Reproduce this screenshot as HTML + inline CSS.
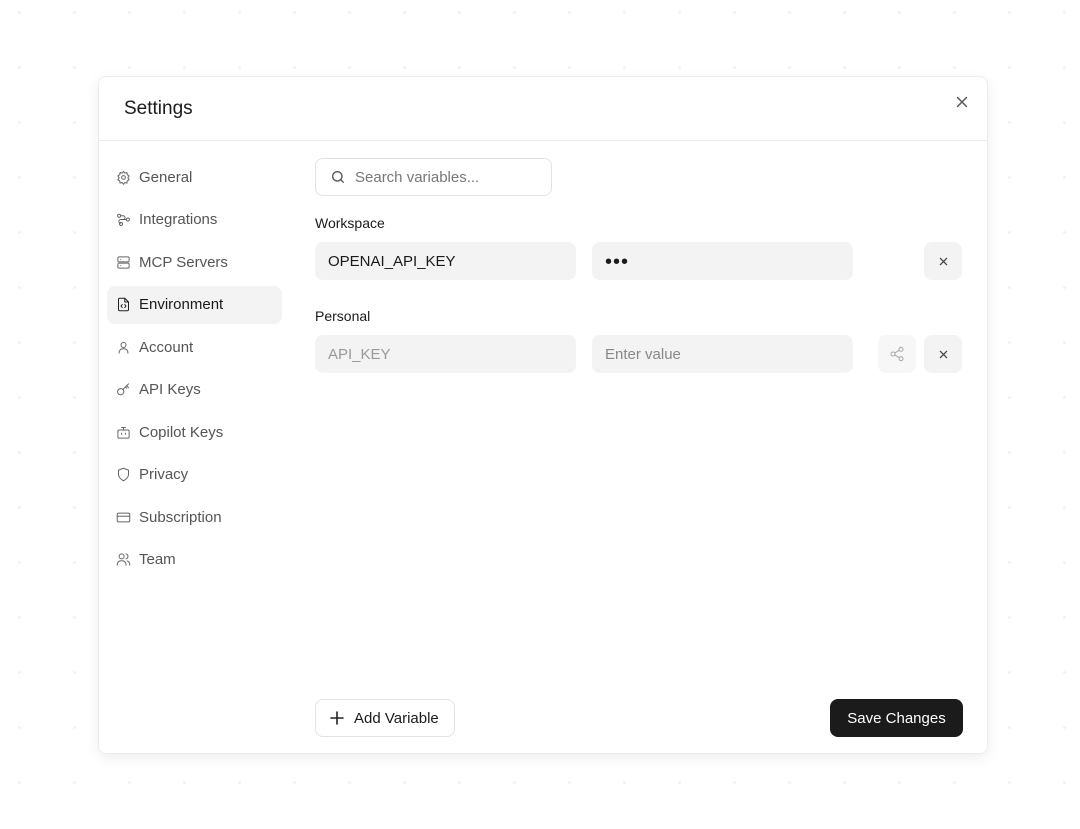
<!DOCTYPE html>
<html><head><style>
*{box-sizing:border-box;margin:0;padding:0}
body{width:1080px;height:829px;overflow:hidden;font-family:"Liberation Sans",sans-serif;background:#fff;background-image:radial-gradient(circle,#f1f1f1 1.2px,transparent 1.7px);background-size:55px 55px;background-position:-8px -15px;position:relative}
.modal{position:absolute;left:98px;top:76px;width:890px;height:678px;background:#fff;border:1px solid #ececec;border-radius:8px;box-shadow:0 4px 14px rgba(0,0,0,.07)}
.title{position:absolute;left:25px;top:21px;font-size:19px;color:#1a1a1a}
.close{position:absolute;left:855px;top:17px}
.hr{position:absolute;left:0;right:0;top:63px;border-top:1px solid #ececec}
.nav{position:absolute;left:8px;top:81px;width:175px}
.item{height:38px;display:flex;align-items:center;padding-left:9px;font-size:15px;color:#555;margin-bottom:4.5px;border-radius:8px}
.item svg{width:15px;height:15px;margin-right:8px;stroke:#666;fill:none;stroke-width:1.6;stroke-linecap:round;stroke-linejoin:round}
.item.act{background:#f3f3f3;color:#1a1a1a}
.item.act svg{stroke:#222}
.abs{position:absolute}
.inp{position:absolute;height:38px;border-radius:8px;background:#f3f3f3;font-size:15px;display:flex;align-items:center;padding-left:13px;color:#1a1a1a}
.btn{position:absolute;width:38px;height:38px;border-radius:8px;background:#f3f3f3;display:flex;align-items:center;justify-content:center}
.lbl{position:absolute;font-size:14px;color:#1a1a1a}
</style></head><body>
<div class="modal">
<div class="title">Settings</div>
<svg class="close" width="16" height="16" viewBox="0 0 16 16" stroke="#555" stroke-width="1.4" stroke-linecap="round"><path d="M3.5 3.5l9 9M12.5 3.5l-9 9"/></svg>
<div class="hr"></div>
<div class="nav">
<div class="item"><svg viewBox="0 0 24 24"><circle cx="12" cy="12" r="3"/><path d="M12 2l2 3 3.5-1 .5 3.5 3 2-2 3 2 3-3 2-.5 3.5-3.5-1-2 3-2-3-3.5 1-.5-3.5-3-2 2-3-2-3 3-2 .5-3.5 3.5 1z"/></svg>General</div>
<div class="item"><svg viewBox="0 0 24 24"><circle cx="5" cy="6" r="2.5"/><circle cx="19" cy="12" r="2.5"/><circle cx="8" cy="19" r="2.5"/><path d="M7.5 6h4a3 3 0 0 1 0 6h-4a3 3 0 0 0 0 6M12 12h4.5"/></svg>Integrations</div>
<div class="item"><svg viewBox="0 0 24 24"><rect x="3" y="3" width="18" height="8" rx="2"/><rect x="3" y="13" width="18" height="8" rx="2"/><path d="M7 7h.01M7 17h.01"/></svg>MCP Servers</div>
<div class="item act"><svg viewBox="0 0 24 24"><path d="M14 2H6a2 2 0 0 0-2 2v16a2 2 0 0 0 2 2h12a2 2 0 0 0 2-2V8z"/><path d="M14 2v6h6M10 12l-2 2.5 2 2.5M14 12l2 2.5-2 2.5"/></svg>Environment</div>
<div class="item"><svg viewBox="0 0 24 24"><circle cx="12" cy="8" r="4"/><path d="M5 21v-1a6 6 0 0 1 6-6h2a6 6 0 0 1 6 6v1"/></svg>Account</div>
<div class="item"><svg viewBox="0 0 24 24"><circle cx="7.5" cy="15.5" r="5"/><path d="M11 12l9-9M17 6l3 3M15 8l2 2"/></svg>API Keys</div>
<div class="item"><svg viewBox="0 0 24 24"><rect x="3" y="8" width="18" height="13" rx="2"/><path d="M12 8V4M9 4h6M9 13v2M15 13v2"/></svg>Copilot Keys</div>
<div class="item"><svg viewBox="0 0 24 24"><path d="M12 22s8-4 8-10V5l-8-3-8 3v7c0 6 8 10 8 10z"/></svg>Privacy</div>
<div class="item"><svg viewBox="0 0 24 24"><rect x="2" y="5" width="20" height="14" rx="2"/><path d="M2 10h20"/></svg>Subscription</div>
<div class="item"><svg viewBox="0 0 24 24"><circle cx="9" cy="7" r="4"/><path d="M2 21v-1a6 6 0 0 1 6-6h2a6 6 0 0 1 6 6v1M16 3.1a4 4 0 0 1 0 7.8M22 21v-1a6 6 0 0 0-4-5.6"/></svg>Team</div>
</div>
<div class="abs" style="left:216px;top:81px;width:237px;height:38px;border:1px solid #e3e3e3;border-radius:8px;display:flex;align-items:center;padding-left:14px;font-size:15px;color:#777">
<svg width="16" height="16" viewBox="0 0 24 24" fill="none" stroke="#555" stroke-width="2" stroke-linecap="round" style="margin-right:9px"><circle cx="11" cy="11" r="7"/><path d="M20 20l-4-4"/></svg>Search variables...</div>
<div class="lbl" style="left:216px;top:138px">Workspace</div>
<div class="inp" style="left:216px;top:165px;width:261px">OPENAI_API_KEY</div>
<div class="inp" style="left:493px;top:165px;width:261px;font-size:20px;letter-spacing:1px;padding-top:2px">•••</div>
<div class="btn" style="left:825px;top:165px"><svg width="9" height="9" viewBox="0 0 10 10" stroke="#444" stroke-width="1.4" stroke-linecap="round"><path d="M1.5 1.5l7 7M8.5 1.5l-7 7"/></svg></div>
<div class="lbl" style="left:216px;top:231px">Personal</div>
<div class="inp" style="left:216px;top:258px;width:261px;color:#999">API_KEY</div>
<div class="inp" style="left:493px;top:258px;width:261px;color:#888">Enter value</div>
<div class="btn" style="left:779px;top:258px;background:#f7f7f7"><svg width="16" height="16" viewBox="0 0 24 24" fill="none" stroke="#aaa" stroke-width="1.6"><circle cx="18" cy="5" r="3"/><circle cx="6" cy="12" r="3"/><circle cx="18" cy="19" r="3"/><path d="M8.6 13.5l6.8 4M15.4 6.5l-6.8 4"/></svg></div>
<div class="btn" style="left:825px;top:258px"><svg width="9" height="9" viewBox="0 0 10 10" stroke="#444" stroke-width="1.4" stroke-linecap="round"><path d="M1.5 1.5l7 7M8.5 1.5l-7 7"/></svg></div>
<div class="abs" style="left:216px;top:622px;width:140px;height:38px;border:1px solid #e3e3e3;border-radius:8px;display:flex;align-items:center;padding-left:14px;font-size:15px;color:#1a1a1a">
<svg width="14" height="14" viewBox="0 0 14 14" stroke="#222" stroke-width="1.6" stroke-linecap="round" style="margin-right:10px"><path d="M7 1v12M1 7h12"/></svg>Add Variable</div>
<div class="abs" style="left:731px;top:622px;width:133px;height:38px;background:#1b1b1b;border-radius:8px;display:flex;align-items:center;justify-content:center;font-size:15px;color:#fff">Save Changes</div>
</div>
</body></html>
